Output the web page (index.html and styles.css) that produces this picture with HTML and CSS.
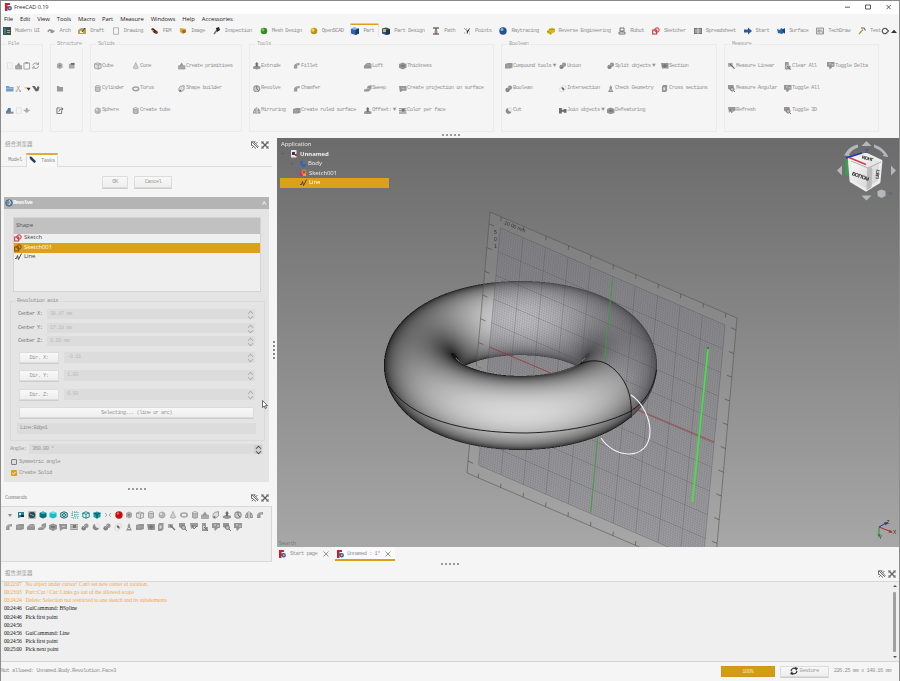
FILE: index.html
```html
<!DOCTYPE html>
<html lang="en">
<head>
<meta charset="utf-8">
<title>FreeCAD 0.19</title>
<link rel="stylesheet" href="styles.css">
</head>
<body>
<div class="app">
  <header class="titlebar"><i data-icon="app"></i><span>FreeCAD 0.19</span>
    <svg class="winbtns" viewBox="0 0 48 8"><path d="M1 4.200h5M21.500 2h5v4h-5zM42.500 2l4.200 4.200M46.700 2l-4.200 4.200" fill="none" stroke="#333" stroke-width=".8"/></svg>
  </header>
  <nav class="menu"><span>File</span><span>Edit</span><span>View</span><span>Tools</span><span>Macro</span><span>Part</span><span>Measure</span><span>Windows</span><span>Help</span><span>Accessories</span></nav>
  <nav class="benches">
    <span><i data-icon="modern"></i>Modern UI</span><span><i data-icon="arch"></i>Arch</span><span><i data-icon="draft"></i>Draft</span><span><i data-icon="page"></i>Drawing</span><span><i data-icon="fem"></i>FEM</span><span><i data-icon="image"></i>Image</span><span><i data-icon="inspect"></i>Inspection</span><span><i data-icon="green"></i>Mesh Design</span><span><i data-icon="yellow"></i>OpenSCAD</span><span class="on"><i data-icon="bluebox"></i>Part</span><span><i data-icon="pdesign"></i>Part Design</span><span><i data-icon="path"></i>Path</span><span><i data-icon="points"></i>Points</span><span><i data-icon="bluesphere"></i>Raytracing</span><span><i data-icon="reverse"></i>Reverse Engineering</span><span><i data-icon="robot"></i>Robot</span><span><i data-icon="sketch"></i>Sketcher</span><span><i data-icon="sheet"></i>Spreadsheet</span><span><i data-icon="start"></i>Start</span><span><i data-icon="surface"></i>Surface</span><span><i data-icon="techdraw"></i>TechDraw</span><span class="last"><i data-icon="hammer"></i>Test</span>
    <svg class="collapse" viewBox="0 0 18 8"><path d="M5 1.500a2.700 2.700 0 1 0 0 5M5 1.500L7.500 4 5 6.500" fill="none" stroke="#555" stroke-width="1.200"/><path d="M10 6l3-3.200L16 6z" fill="#333"/></svg>
  </nav>
  <section class="ribbon">
    <div class="group g-file"><h6>File</h6>
      <div class="row"><i data-icon="page" class="dim"></i><i data-icon="prims"></i><i data-icon="clip"></i><i data-icon="refresh"></i></div>
      <div class="row"><i data-icon="folderblue"></i><i data-icon="cut"></i><i data-icon="dropy"></i><i data-icon="cursorq"></i></div>
      <div class="row"><i data-icon="save"></i><i data-icon="page" class="dim"></i><i data-icon="drop"></i></div>
    </div>
    <div class="group g-struct"><h6>Structure</h6>
      <div class="row"><i data-icon="part"></i><i data-icon="export"></i></div>
      <div class="row"><i data-icon="folder"></i></div>
      <div class="row"><i data-icon="link"></i></div>
    </div>
    <div class="group g-solids"><h6>Solids</h6>
      <div class="row"><span><i data-icon="cube"></i>Cube</span><span><i data-icon="cone"></i>Cone</span><span><i data-icon="prims"></i>Create primitives</span></div>
      <div class="row"><span><i data-icon="cyl"></i>Cylinder</span><span><i data-icon="torus"></i>Torus</span><span><i data-icon="builder"></i>Shape builder</span></div>
      <div class="row"><span><i data-icon="sphere"></i>Sphere</span><span><i data-icon="tube"></i>Create tube</span></div>
    </div>
    <div class="group g-tools"><h6>Tools</h6>
      <div class="row"><span><i data-icon="extrude"></i>Extrude</span><span><i data-icon="fillet"></i>Fillet</span><span><i data-icon="loft"></i>Loft</span><span><i data-icon="thick"></i>Thickness</span></div>
      <div class="row"><span><i data-icon="revolve"></i>Revolve</span><span><i data-icon="fillet"></i>Chamfer</span><span><i data-icon="sweep"></i>Sweep</span><span><i data-icon="flag"></i>Create projection on surface</span></div>
      <div class="row"><span><i data-icon="mirror"></i>Mirroring</span><span><i data-icon="ruled"></i>Create ruled surface</span><span><i data-icon="extrude"></i>Offset: <b>▼</b></span><span><i data-icon="layers"></i>Color per face</span></div>
    </div>
    <div class="group g-bool"><h6>Boolean</h6>
      <div class="row"><span><i data-icon="ruled"></i>Compound tools <b>▼</b></span><span><i data-icon="union"></i>Union</span><span><i data-icon="union"></i>Split objects <b>▼</b></span><span><i data-icon="section"></i>Section</span></div>
      <div class="row"><span><i data-icon="union"></i>Boolean</span><span><i data-icon="inter"></i>Intersection</span><span><i data-icon="check"></i>Check Geometry</span><span><i data-icon="tube2"></i>Cross sections</span></div>
      <div class="row"><span><i data-icon="cutb"></i>Cut</span><span><i data-icon="join"></i>Join objects <b>▼</b></span><span><i data-icon="thick"></i>Defeaturing</span></div>
    </div>
    <div class="group g-meas"><h6>Measure</h6>
      <div class="row"><span><i data-icon="mlin"></i>Measure Linear</span><span><i data-icon="clear"></i>Clear All</span><span><i data-icon="toggle"></i>Toggle Delta</span></div>
      <div class="row"><span><i data-icon="mang"></i>Measure Angular</span><span><i data-icon="toggle"></i>Toggle All</span></div>
      <div class="row"><span><i data-icon="mref"></i>Refresh</span><span><i data-icon="mang"></i>Toggle 3D</span></div>
    </div>
  </section>
  <div class="dots dots-top"></div>

  <main class="main">
    <aside class="combo">
      <div class="dockhead h1"><span>组合浏览器</span><i data-icon="float"></i><i data-icon="close"></i></div>
      <div class="paneltabs"><span>Model</span><span class="on"><i data-icon="pencil"></i>Tasks</span></div>
      <div class="okrow"><button class="ok">OK</button><button class="cancel">Cancel</button></div>
      <div class="task">
        <div class="taskhead"><i data-icon="revblue"></i><b>Revolve</b><em>^</em></div>
        <div class="shapes">
          <div class="th">Shape</div>
          <div class="tr"><i data-icon="sketch"></i>Sketch</div>
          <div class="tr sel"><i data-icon="sketchd"></i>Sketch001</div>
          <div class="tr"><i data-icon="line"></i>Line</div>
        </div>
        <div class="axis">
          <h6>Revolution axis</h6>
          <div class="f c"><label>Center X:</label><div class="spin">38.87 mm<s></s></div></div>
          <div class="f c"><label>Center Y:</label><div class="spin">17.18 mm<s></s></div></div>
          <div class="f c"><label>Center Z:</label><div class="spin">0.00 mm<s></s></div></div>
          <div class="f d"><button>Dir. X:</button><div class="spin">-0.11<s></s></div></div>
          <div class="f d"><button>Dir. Y:</button><div class="spin">1.00<s></s></div></div>
          <div class="f d"><button>Dir. Z:</button><div class="spin">0.00<s></s></div></div>
          <button class="selecting">Selecting... (line or arc)</button>
          <div class="edge">Line:Edge1</div>
        </div>
        <div class="angle"><label>Angle:</label><div class="spin">360.00 °<s></s></div></div>
        <div class="ck"><svg viewBox="0 0 6 6"><rect x=".5" y=".5" width="5" height="5" rx=".5" fill="#ddd" stroke="#666" stroke-width=".8"/></svg>Symmetric angle</div>
        <div class="ck"><svg viewBox="0 0 6 6"><rect width="6" height="6" rx=".8" fill="#d9a01c"/><path d="M1.300 3l1.200 1.200L4.700 1.800" fill="none" stroke="#fff" stroke-width=".9"/></svg>Create Solid</div>
      </div>
      <div class="dots dots-left"></div>
      <div class="dockhead h2"><span>Commands</span><i data-icon="float"></i><i data-icon="close"></i></div>
      <div class="commands">
        <div class="crow" data-icons="arrow fit shaded cubeteal cubecyan ring dotsbox wire cubeteal2 gap red part cube cyl sphere cone torus tube prims builder extrude revolve mirror fillet"></div>
        <div class="crow c2" data-icons="fillet ruled loft sweep thick flag layers union cutb union inter check ruled section tube2 mlin mang mref clear toggle mang toggle"></div>
      </div>
    </aside>
    <div class="vdots"></div>

    <section class="work">
      <div class="view">
        <canvas id="torus" class="torus" width="280" height="176"></canvas>
        <svg class="scene" viewBox="277 138 622 409">
          <defs>
            <mask id="behind" maskUnits="userSpaceOnUse" x="277" y="138" width="622" height="409">
              <rect x="277" y="138" width="622" height="409" fill="#fff"/>
              <path d="M384 345H458C463 361 484 376 522 376C552 376 572 371 580 363C588 359 600 359 609 366C622 375 631 389 631 412L630 418C602 442 560 450 521 450C440 450 384 410 384 365Z" fill="#000"/>
            </mask>
            <linearGradient id="cubeface" x1="0" x2="1" y1="0" y2="1"><stop stop-color="#fff"/><stop offset="1" stop-color="#ccc"/></linearGradient>
          </defs>
          <g mask="url(#behind)">
            <g id="grid"></g>
            <path d="M612.500 278L590.500 512" stroke="#36a83a" stroke-width=".8"/>
            <path d="M489 347L714 442" stroke="#a33a40" stroke-width=".8"/>
          </g>
          <path d="M389 386C410 418 462 433 526 433C574 432 610 422 631 411C645 402 654 388 656.500 370" fill="none" stroke="#111" stroke-width=".9"/>
          <path d="M580 364C592 359 602 360 610 366C624 376 633 393 631 418" fill="none" stroke="#111" stroke-width=".9"/>
          <path d="M631 395C642 402 650 418 650 431C650 447 640 454.500 628 454C617 453 607 447 601 438" fill="none" stroke="#f5f5f5" stroke-width="1.100"/>
          <path d="M708 349L692.500 501" stroke="#3be645" stroke-width="1.700"/>
          <circle cx="708" cy="348" r="1" fill="#267a2b"/><circle cx="692.500" cy="501" r="1" fill="#3be645"/>
          <text class="gridtext" transform="translate(504 224) rotate(22)">10.00 mm</text>
          <text class="gridtext" transform="translate(494 234)">5</text><text class="gridtext" transform="translate(494 241)">0</text><text class="gridtext" transform="translate(494 248)">1</text>
          <g fill="#b4b7bb">
            <path d="M866.500 141l5 5h-10zM866.500 200.500l-5-5h10zM837 170.500l5-5v10zM896 170.500l-5-5v10z"/>
            <path d="M845 154q4-8 13-9.500v3q-6 2-9 7l1 1.500-6-.5zM888 156q-4-8-14-11.500l0 3q6 2 10 7l-1.500 1.500 5.500 1z"/>
            <path d="M877.500 191l4-1.500 4 1.500v5l-4 2-4-2z"/><path d="M888 192.500h5l-2.500 3z" fill="#666"/>
          </g>
          <path d="M849 158L866 154 881 161 879 182 866 190 851 181Z" fill="url(#cubeface)" stroke="#eee" stroke-width="2.800" stroke-linejoin="round"/>
          <path d="M851 161L868 168 881 162M868 168L867 190" fill="none" stroke="#a9a9a9" stroke-width=".9"/>
          <path d="M868 168l3-1.500 1.500 2.500-1 18-4 3z" fill="#b9bbbd"/>
          <path d="M849 157.500L866 164.500" stroke="#d63c45" stroke-width="1.500"/>
          <path d="M846.800 159V175.500" stroke="#2da84a" stroke-width="2.600"/><path d="M846 158L862 153" stroke="#2832b8" stroke-width="1.800"/>
          <text class="cubetext" transform="translate(851.500 175) rotate(20)">BOTTOM</text><text class="cubetext small" transform="translate(861.500 158.500) rotate(14)">RIGHT</text><text class="cubetext small" transform="translate(878.500 179) rotate(-82)">LEFT</text><text class="zlab" x="865" y="153">Z</text>
          <g fill="none" stroke-width="1"><path d="M879 527l13 5" stroke="#b52b2b"/><path d="M879 527v9" stroke="#24983b"/><path d="M879 527l7-4" stroke="#2b3291"/></g>
          <path d="M893 532.500l-4.500.3 1.300-3z" fill="#b52b2b"/><path d="M879 538l-1.800-4h3.600z" fill="#24983b"/><path d="M888 522l-4 .5 1.700 3z" fill="#2b3291"/>
          <text class="axlab" x="886.500" y="523.500">Z</text><text class="axlab" x="893" y="534">X</text><text class="axlab" x="879" y="539">Y</text>
        </svg>
        <div class="tree">
          <div>Application</div>
          <div class="t1"><u>−</u><i data-icon="doc"></i><b>Unnamed</b></div>
          <div class="t2"><u>›</u><i data-icon="body"></i>Body</div>
          <div class="t3"><i data-icon="sk2"></i>Sketch001</div>
          <div class="t3 sel"><i data-icon="line"></i>Line</div>
        </div>
        <div class="search">Search</div>
      </div>
      <div class="doctabs"><span><i data-icon="app"></i>Start page<i data-icon="x"></i></span><span class="on"><i data-icon="app"></i>Unnamed : 1*<i data-icon="x"></i></span></div>
      <div class="dots dots-work"></div>
    </section>
  </main>

  <section class="report">
    <div class="dockhead h3"><span>报告浏览器</span><i data-icon="float"></i><i data-icon="close"></i></div>
    <div class="log">
      <div class="lines">
        <p class="w"><time>00:22:07</time>No object under cursor! Can't set new center of rotation.</p>
        <p class="w"><time>00:23:03</time>Part::Cut / Cut: Links go out of the allowed scope</p>
        <p class="w"><time>00:24:24</time>Delete: Selection not restricted to one sketch and its subelements</p>
        <p><time>00:24:46</time>GuiCommand: BSpline</p>
        <p><time>00:24:46</time>Pick first point</p>
        <p><time>00:24:56</time></p>
        <p><time>00:24:56</time>GuiCommand: Line</p>
        <p><time>00:24:56</time>Pick first point</p>
        <p><time>00:25:00</time>Pick next point</p>
      </div>
      <div class="scroll"><svg viewBox="0 0 4 3"><path d="M0 3l2-2 2 2z"/></svg><div class="thumb"></div><svg viewBox="0 0 4 3"><path d="M0 0l2 2 2-2z"/></svg></div>
    </div>
  </section>
  <footer class="status"><span class="msg">Not allowed: Unnamed.Body.Revolution.Face3</span><div class="bar">100%</div><button><i data-icon="gest"></i>Gesture</button><span class="dim2">226.25 mm x 140.16 mm</span></footer>
</div>
<svg class="pointer" viewBox="0 0 6 9"><path d="M.5.500v7L2.200 6l1.100 2.500 1.200-.5-1.100-2.400H5.500z" fill="#fff" stroke="#333" stroke-width=".7"/></svg>
<script src="app.js"></script>
</body>
</html>
```
FILE: styles.css
```css
* { box-sizing: border-box; margin: 0; padding: 0; }
body {
  width: 900px; height: 681px; overflow: hidden; background: #f5f5f5;
  font: 5.5px/8px "Liberation Mono", "Noto Sans CJK SC", monospace; letter-spacing: -.57px; color: #949494;
}
i { display: inline-block; flex: none; width: 8px; height: 8px; }
i svg { display: block; width: 100%; height: 100%; }
button { font: inherit; letter-spacing: inherit; color: #999; border: 1px solid #dcdcdc; border-radius: 1px; background: linear-gradient(#f8f8f8, #eee); box-shadow: 0 1px 0 #ccc; white-space: pre; }
.app { display: flex; flex-direction: column; width: 900px; height: 681px; border: 1px solid #8c8c8c; border-top-color: #888; border-bottom: 0; white-space: nowrap; }

.titlebar { height: 13px; background: #fff; display: flex; align-items: center; gap: 2px; padding: 0 7px 1px 3px; font: 5.7px/8px "Open Sans", sans-serif; letter-spacing: -.1px; color: #333; }
.winbtns { width: 48px; height: 8px; margin-left: auto; }
.menu { height: 10px; display: flex; gap: 7px; padding-left: 3px; font: 5.9px/10px "Open Sans", sans-serif; letter-spacing: -.07px; color: #222; }
.benches { height: 15px; display: flex; align-items: center; padding: 0 0 1px 2px; }
.benches span { display: flex; align-items: center; gap: 4px; height: 14px; margin-right: 7.9px; }
.benches .on { box-shadow: 0 -2px 0 -.5px #d9a01c; border: 1px solid #e6e6e6; border-width: 0 1px; margin-left: -1px; padding-right: 4px; margin-right: 3px; height: 12px; }
.benches .last { margin-right: 0; }
.collapse { width: 18px; height: 8px; flex: none; }

.ribbon { display: flex; height: 93px; padding-top: 5px; }
.group { position: relative; border: 1px solid #ebebeb; height: 88px; padding: 10px 0 0 3px; margin-right: 7px; flex: none; }
.group h6 { position: absolute; left: 5px; top: -5px; font-weight: 400; font-size: 5.5px; line-height: 8px; padding: 0 2px; background: #f5f5f5; color: #a6a6a6; }
.row { display: grid; height: 22.200px; align-items: center; }
.row span { display: flex; align-items: center; gap: .5px; }
.row b { font-size: 6px; letter-spacing: 0; margin-left: 1px; font-weight: 400; }
.row span i, .row > i { width: 7.500px; height: 7.500px; }
.g-file { width: 42px; border-left: 0; padding-left: 5px; }
.g-file .row, .g-struct .row { grid-template-columns: repeat(4, 8.700px); }
.g-struct { width: 33px; padding-left: 5px; } .g-struct .row { grid-template-columns: 11.700px 12px; }
.g-struct h6 { left: 4px; }
.g-solids { width: 152px; } .g-solids .row { grid-template-columns: 38px 46px 60px; }
.g-tools { width: 245px; } .g-tools .row { grid-template-columns: 40px 71px 35px 90px; }
.g-bool { width: 216px; } .g-bool .row { grid-template-columns: 54px 48px 54px 50px; }
.g-meas { width: 155px; } .g-meas .row { grid-template-columns: 56px 43px 50px; }
.dim { opacity: .3; }
.dots { height: 2px; width: 18px; background: repeating-linear-gradient(90deg, #999 0 2px, transparent 2px 4px); }
.dots-top { margin: 2px 0 2px 441px; }

.main { height: 429px; display: flex; }
.combo { width: 271px; display: flex; flex-direction: column; }
.dockhead { display: flex; align-items: center; gap: 2px; padding: 0 3px 0 4px; letter-spacing: 0; font-size: 5.5px; flex: none; }
.dockhead span { margin-right: auto; }
.h1 { height: 15px; padding-bottom: 1px; }
.paneltabs { height: 14px; display: flex; border-bottom: 1px solid #dcdcdc; padding-left: 7px; }
.paneltabs span { line-height: 13px; width: 18px; }
.paneltabs .on { display: flex; gap: 4px; align-items: center; width: 32px; height: 14px; padding: 0 0 2px 2px; border-top: 2px solid #e0aa38; border-left: 1px solid #ddd; border-right: 1px solid #ddd; background: #f8f8f8; }
.okrow { height: 30px; padding: 9px 0 0 101px; display: flex; gap: 6px; }
.okrow button { height: 12px; } .ok { width: 26px; } .cancel { width: 38px; }
.task { margin-left: 3px; width: 265px; height: 285px; background: #e4e4e4; flex: none; }
.taskhead { height: 12px; background: #b4b4b4; color: #fff; display: flex; align-items: center; padding: 0 3px 0 1px; }
.taskhead em { margin-left: auto; font-style: normal; font-size: 8px; line-height: 6px; padding-top: 3px; }
.shapes { margin: 8px 0 0 9px; width: 248px; height: 75px; background: #efefef; border: 1px solid #d4d4d4; font: 6px/9.600px "Open Sans", sans-serif; letter-spacing: -.08px; color: #444; }
.th { height: 15.500px; line-height: 15px; background: #c1c1c1; padding-left: 2px; color: #555; }
.tr { display: flex; align-items: center; gap: 2px; height: 9.500px; }
.sel { background: #dba219; color: #fff; }
.axis { position: relative; margin: 9px 0 0 6px; width: 255px; height: 140px; border: 1px solid #dadada; padding: 5.500px 9px 0 6px; }
.axis h6 { position: absolute; left: 4px; top: -5px; padding: 0 2px; font-weight: 400; font-size: 5.5px; line-height: 8px; background: #e4e4e4; }
.f { display: flex; align-items: center; } .f.c { height: 13.600px; } .f.d { height: 18.300px; }
.f.c label { width: 30px; padding-left: 1px; color: #777; }
.f.d button { width: 40px; height: 11px; margin: 0 5px 0 2px; line-height: 9px; }
.spin { position: relative; flex: 1; height: 10px; line-height: 10px; padding-left: 3px; background: #dcdcdc; color: #bdbdbd; }
.f.d .spin { height: 11px; }
.spin s { position: absolute; right: 1px; top: 1px; width: 8px; height: 9px; color: #a5a5a5; text-decoration: none; }
.spin s::before, .spin s::after { content: ""; position: absolute; left: 2px; width: 4px; height: 4px; border: 1px solid currentColor; border-width: 1px 0 0 1px; transform: rotate(45deg) scale(.8); top: 1px; }
.spin s::after { top: 4px; transform: rotate(225deg) scale(.8); }
.selecting { display: block; width: 235px; height: 11px; line-height: 9px; margin: 3.500px 0 5px 2px; }
.edge { height: 11px; width: 239px; background: #dcdcdc; padding-left: 3px; line-height: 10px; }
.angle { display: flex; align-items: center; height: 15px; padding-left: 6px; }
.angle label { width: 19px; } .angle .spin { flex: none; width: 234px; color: #999; } .angle s { background: #cfcfcf; color: #333; }
.ck { display: flex; align-items: center; gap: 2px; height: 11.500px; padding-left: 7px; } .ck svg { width: 6px; height: 6px; }
.ck, .angle { position: relative; }
.dots-left { margin: 6px 0 0 127px; }
.h2 { height: 16px; letter-spacing: -.57px; }
.commands { width: 271px; height: 56px; border: 1px solid #d8d8d8; border-left: 0; background: #efefef; padding: 2px 0 0 5px; }
.crow { display: flex; gap: 2.870px; height: 12px; align-items: center; }
.crow.c2 { margin-left: -1px; gap: 2.900px; }
.vdots { width: 2px; height: 18px; margin: 203px 2px 0 1px; background: repeating-linear-gradient(#888 0 2px, transparent 2px 4px); }
.work { width: 622px; }
.view { position: relative; height: 409px; background: linear-gradient(#6b6b6b, #a7a7a7); overflow: hidden; }
.torus { position: absolute; left: 104px; top: 140px; width: 280px; height: 176px; }
.scene { position: absolute; inset: 0; width: 622px; height: 409px; }
.gridtext { font: 5px "Liberation Sans", sans-serif; letter-spacing: 0; fill: #333; }
.cubetext { font: bold 5.200px "Liberation Sans", sans-serif; letter-spacing: -.9px; fill: #222; } .cubetext.small { font-size: 4.500px; letter-spacing: -.6px; } .zlab { font: 6px "Liberation Sans", sans-serif; fill: #3238a0; }
.axlab { font: 5px "Liberation Sans", sans-serif; letter-spacing: 0; fill: #333; }
.tree { position: absolute; left: 3px; top: 2px; width: 109px; font: 6px/9.500px "Open Sans", sans-serif; letter-spacing: -.08px; color: #eee; }
.tree div { display: flex; align-items: center; height: 9.500px; padding-left: 1px; gap: 2px; }
.tree u { width: 7px; text-decoration: none; color: #444; } .tree .t1 { gap: 2px; } .tree .t2 { padding-left: 11px; gap: 1px; } .tree .t3 { padding-left: 19px; }
.search { position: absolute; left: 2px; bottom: 0; font: 5.500px/8px "Open Sans", sans-serif; letter-spacing: 0; color: #777; }
.doctabs { display: flex; height: 14px; gap: 3px; }
.doctabs span { display: flex; align-items: center; height: 14px; gap: 4px; padding: 0 2px 0 1px; }
.doctabs .on { border-bottom: 2px solid #d9a01c; background: #fafafa; gap: 3px; width: 60px; padding: 1px 1px 0; }
.doctabs i:last-child { margin-left: 1px; }
.dots-work { margin: 2px 0 0 164px; }

.report { height: 95px; }
.h3 { height: 14px; }
.log { height: 81px; border-top: 1px solid #d8d8d8; border-bottom: 1px solid #d4d4d4; background: #efefef; display: flex; overflow: hidden; }
.lines { flex: 1; margin-top: -2px; padding-left: 3px; font: 5.600px/8.130px "Liberation Serif", serif; letter-spacing: -.06px; color: #222; }
.lines p { height: 8.130px; } .lines time { display: inline-block; width: 21.500px; letter-spacing: -.3px; } .lines .w { color: #f0a94b; }
.scroll { width: 8px; display: flex; flex-direction: column; padding: 2px; justify-content: space-between; } .scroll svg { width: 4px; height: 3px; fill: #555; } .thumb { height: 60px; width: 3px; background: #a0a0a0; border-radius: 1px; }
.status { height: 18px; display: flex; align-items: center; padding-right: 8px; }
.msg { margin-right: auto; }
.bar { width: 54px; height: 11px; background: #d39c14; color: #f5e0ae; text-align: center; line-height: 9px; border: 1px solid #c8981e; margin-right: 5px; }
.status button { width: 49px; height: 11px; margin-right: 5px; display: flex; align-items: center; justify-content: center; gap: 2px; }
.pointer { position: absolute; left: 262px; top: 400px; width: 6px; height: 9px; }
```
FILE: app.js
```js
// Icons are drawn on an 8x8 canvas.
const G = '#959595', D = '#6c6c6c', L = '#c4c4c4';
const icons = {
  app: '<path d="M1 0h5v2H3.500v1.500h2v2h-2V8H1z" fill="#c8232c"/><circle cx="5.700" cy="5.300" r="1.600" fill="#a9bbd8" stroke="#3b5a94" stroke-width="1.200"/>',
  modern: '<path d="M0 0h8v8H0z" fill="#3d5145"/><path d="M1 1h2v6H1z" fill="#2b79a8"/><path d="M4 3h3v1H4zM4 5h3v1H4z" fill="#c2a55d"/>',
  arch: `<path d="M0 4l2.500-2 2 .5L8 4 6 6H3z" fill="${G}"/><path d="M2 4h1.500v2H2z" fill="#eee"/>`,
  draft: '<path d="M0 7V3l3-2h5v6z" fill="#b2a466"/><path d="M2 4h3v2H2z" fill="#f5f0c2"/><path d="M4 5l3-4" stroke="#444"/>',
  page: '<path d="M1.500.800h5v6.500h-5z" fill="#f5f5f5" stroke="#999" stroke-width=".7"/>',
  fem: '<path d="M0 2l2-1 5 4-1 2-3-1z" fill="#4c2418"/><path d="M1 3l2 1" stroke="#e89623"/><circle cx="5.500" cy="5.500" r="1" fill="#b3392b"/>',
  image: '<path d="M1 1l6 1v3L4 7 1 5z" fill="#d9a13a"/><circle cx="5" cy="4.500" r="1.800" fill="#a36828"/>',
  inspect: '<path d="M1 7l3-4" stroke="#777" stroke-width="1.500"/><path d="M3 1l3-1 1 3-3 2z" fill="#223"/>',
  green: '<circle cx="4" cy="4" r="3.300" fill="#378c20"/><circle cx="3" cy="3" r="1.400" fill="#72cc46"/>',
  yellow: '<circle cx="4" cy="4" r="3.300" fill="#b99417"/><circle cx="3" cy="3" r="1.700" fill="#f0d447"/>',
  bluebox: '<path d="M0 2l3-1.500L8 1.500v5L4.500 8 0 6.500z" fill="#2d64ad"/><path d="M0 2l4.500 1L8 1.500 3 .5z" fill="#86b3e5"/><path d="M4.500 3L8 1.500v5L4.500 8z" fill="#1c3b68"/>',
  pdesign: '<path d="M0 1.500L4 .5 8 2v5L4 8 0 6.500z" fill="#30527f"/><path d="M1 2h3v3H1z" fill="#cdbf46"/><path d="M4 3l4-1v5L4 8z" fill="#23364d"/>',
  path: '<path d="M1 1h6M1 7h6M4 1v6" stroke="#776f69" stroke-width="1.700"/><path d="M2 5h4" stroke="#b09892"/>',
  points: '<path d="M1 1l3 3M7 1L4 4v3M1 6h1M6 5h1M3 2h1M6 7h1" stroke="#888" stroke-width=".8"/>',
  bluesphere: '<circle cx="4" cy="4" r="3.700" fill="#24518f"/><circle cx="3" cy="2.500" r="1.500" fill="#86b5e3"/>',
  reverse: '<path d="M2 2l3-1.500L8 2v3L5 6.500 4 8 0 6V4z" fill="#d9bd20"/><path d="M2 2l3 1 3-1M0 4.500L3 5l1 2" stroke="#8c7812" stroke-width=".6" fill="none"/>',
  robot: '<path d="M2 1h4v3H2zM1 5h6v2H1zM4 4v1" fill="none" stroke="#666" stroke-width=".9"/>',
  sketch: '<rect x=".7" y="3" width="4" height="4" fill="none" stroke="#c8262e" stroke-width="1"/><circle cx="5" cy="3" r="2.200" fill="none" stroke="#c8262e" stroke-width="1"/>',
  sketchd: '<rect x=".7" y="3" width="4" height="4" fill="none" stroke="#8d3f12" stroke-width="1"/><circle cx="5" cy="3" r="2.200" fill="none" stroke="#8d3f12" stroke-width="1"/>',
  sheet: '<path d="M0 1h8v6H0z" fill="#777"/><path d="M1 3h6M1 5h6M4 1v6" stroke="#eee" stroke-width=".7"/>',
  start: '<path d="M0 2.500h4V.500L8 4 4 7.500v-2H0z" fill="#2d589b"/>',
  surface: '<path d="M0 2l3 1 1-2 2 1 2-1v4L5 7 1 6z" fill="#2766a5"/><path d="M5 3l3-1v5z" fill="#173d6c"/>',
  techdraw: '<path d="M.500 1h7v6h-7z" fill="#ddd" stroke="#777" stroke-width=".7"/><path d="M2 3h2v2H2zM5 3l2 3" fill="none" stroke="#777" stroke-width=".6"/>',
  hammer: '<path d="M1 7l4-4.500" stroke="#b09242" stroke-width="1.200"/><path d="M3 1h3l1.500 2.500" fill="none" stroke="#666" stroke-width="1.100"/>',
  clip: `<path d="M1 1h6v6.500H1zM3 .5h2v1H3z" fill="none" stroke="${G}" stroke-width=".9"/>`,
  refresh: `<path d="M1 3.500A3 3 0 0 1 6.500 2.500M7 .5v2.300H4.800M7 4.500A3 3 0 0 1 1.500 5.500M1 7.500V5.200h2.200" fill="none" stroke="${G}" stroke-width="1"/>`,
  folderblue: '<path d="M0 1h3l1 1h4v5H0z" fill="#6f9dc8"/><path d="M0 3h8v1H0z" fill="#a6c5e2"/>',
  folder: '<path d="M1 1h2l1 1h3.500v5H1z" fill="#999"/>',
  cut: '<path d="M2 1l3 5M5 1L2 6" stroke="#999" stroke-width=".8"/><circle cx="1.500" cy="6.500" r="1" fill="#d8a0a0"/><circle cx="5.500" cy="6.500" r="1" fill="#999"/>',
  dropy: '<path d="M1 2h4l1 2H2z" fill="#e7d96c"/><path d="M4 3h4L6 6z" fill="#333"/>',
  cursorq: '<path d="M0 1h3l2 3 1-3 2 1-1 4-3 1z" fill="#666"/>',
  save: '<path d="M0 5l3-4v3h2v3H0z" fill="#3d78a8"/><path d="M2 1h3v4H2z" fill="#557fa0"/><path d="M1 5h7v2H1z" fill="#888"/>',
  drop: '<path d="M0 3h8L4 6.500z" fill="#aaa"/><path d="M4 1v3" stroke="#aaa" stroke-width="2"/>',
  part: `<path d="M1 2l3-1.500L7 2v4L4 7.500 1 6z" fill="#aaa"/><circle cx="4" cy="4" r="1.200" fill="#888"/>`,
  export: `<path d="M1 2h6v5H1z" fill="#aaa"/><path d="M3 1h4v2H3z" fill="${D}"/>`,
  link: `<path d="M6 4v3H1V1h3" fill="none" stroke="${D}"/><path d="M3 5q0-3 4-3M5 .5L7.500 2 6 4" fill="none" stroke="${D}"/>`,
  cube: `<path d="M.500 2l3-1 4 1v4.500l-3 1-4-1zM.500 2l4 1 3-1M4.500 3v4.500" fill="#ddd" stroke="${G}" stroke-width=".8"/>`,
  cone: `<path d="M4 .5L6.700 6.500q-2.700 1.500-5.400 0z" fill="#d0d0d0" stroke="${G}" stroke-width=".6"/>`,
  cyl: `<path d="M1.500 1.500v5q2.500 1.500 5 0v-5" fill="${L}" stroke="${G}" stroke-width=".8"/><ellipse cx="4" cy="1.500" rx="2.500" ry="1" fill="#e3e3e3" stroke="${G}" stroke-width=".7"/>`,
  torus: `<ellipse cx="4" cy="4" rx="3.200" ry="2" fill="none" stroke="#a2a2a2" stroke-width="1.600"/>`,
  sphere: `<circle cx="4" cy="4" r="3.100" fill="#b5b5b5" stroke="${G}" stroke-width=".5"/><circle cx="3" cy="3" r="1.200" fill="#ddd"/>`,
  tube: `<path d="M1.500 1.500v5q2.500 1.500 5 0v-5" fill="#bbb" stroke="${G}" stroke-width=".9"/><ellipse cx="4" cy="1.700" rx="2.500" ry="1" fill="#eee" stroke="${G}" stroke-width=".8"/>`,
  tube2: `<path d="M2 0h4.500v6L4.500 8H1V2z" fill="${G}"/><path d="M2.500 2.500h2v3h-2z" fill="#ddd"/>`,
  prims: `<path d="M.500 4h7v3.500h-7z" fill="#aaa" stroke="${G}" stroke-width=".7"/><path d="M4 .5l2 3.500H1.500z" fill="${G}"/>`,
  builder: `<path d="M2.500 1.500l4-1v4.500l-3.500 2.500-2-1V3.500z" fill="#ddd" stroke="${G}" stroke-width=".9"/><circle cx="2.500" cy="6" r="1" fill="${D}"/>`,
  extrude: `<path d="M0 5l4-1.500L8 5v2L4 8 0 7z" fill="${G}"/><path d="M4 0l2 2.500H5V5H3V2.500H2z" fill="${D}"/>`,
  fillet: `<path d="M1 7V4q1-3 6-3v2.500H4.500V7z" fill="${G}"/><path d="M2 6V4q1-2 4-2" fill="none" stroke="${L}" stroke-width=".5"/>`,
  loft: `<path d="M0 7V4l3-3h4l1 2v4z" fill="${G}"/><path d="M3 1v2h5" fill="none" stroke="${L}" stroke-width=".5"/>`,
  thick: `<path d="M0 2l4-1.500L8 2v4L4 8 0 6z" fill="${G}"/><path d="M2 3h4v2H2z" fill="#777"/>`,
  revolve: `<circle cx="4" cy="4" r="3.200" fill="#ccc" stroke="${G}" stroke-width="1.200"/><path d="M4 1v3l2 2" fill="none" stroke="${D}"/>`,
  revblue: '<circle cx="4" cy="4" r="3.200" fill="#7994ab" stroke="#3e617d" stroke-width="1"/><path d="M4 1q3 2 0 5" fill="none" stroke="#d6e1e9"/>',
  sweep: `<path d="M0 5l3-1 1-3 4-1v4L5 7H0z" fill="${G}"/><path d="M3 4h3" stroke="#ddd" stroke-width=".6"/>`,
  flag: `<path d="M0 1h8v5H4L1 8z" fill="${G}"/><path d="M3 3h3v1H3z" fill="#ccc"/>`,
  mirror: `<path d="M3 7H0q0-5 3-6zM5 7h3q0-5-3-6z" fill="${G}"/><path d="M4 0v8" stroke="${D}" stroke-width=".6"/><path d="M1 5h1M6 5h1" stroke="#eee"/>`,
  ruled: `<path d="M0 2l3-1h5v5L5 7H0z" fill="${G}"/><path d="M0 4h8M3 1v6" stroke="#bbb" stroke-width=".4"/>`,
  layers: `<path d="M0 1h8v1.500H0zM0 3.300h8v1.500H0zM0 5.600h8v1.500H0z" fill="#9b9b9b"/><path d="M3 2h3v3H3z" fill="#777"/>`,
  union: `<circle cx="5.300" cy="2.800" r="2.300" fill="${G}"/><circle cx="2.700" cy="5.200" r="2.300" fill="#828282"/><path d="M2 5l3-3" stroke="#ccc" stroke-width=".6"/>`,
  cutb: `<path d="M3 1a3.200 3.200 0 1 0 4 4q-4 0-4-4z" fill="#888"/><circle cx="5.500" cy="2.500" r="2" fill="#eee" stroke="#ccc" stroke-width=".4"/>`,
  inter: `<circle cx="5" cy="3" r="2.500" fill="none" stroke="#ccc" stroke-width=".6"/><circle cx="3" cy="5" r="2.500" fill="none" stroke="#ccc" stroke-width=".6"/><path d="M3 2.500q3 0 2.500 3-3 0-2.500-3z" fill="${D}"/>`,
  check: `<path d="M4 0l1.500 3-.5 1 2 3.500H1L3 4l-.5-1z" fill="${G}"/><path d="M3 5h2v1H3z" fill="#ddd"/>`,
  section: `<path d="M0 1h8v6H1z" fill="${G}"/><path d="M1 4l3-2 3 2-3 2z" fill="#777"/>`,
  join: `<path d="M0 1h3v6H0zM5 2h3v4H5zM3 3h2v2H3z" fill="${D}"/>`,
  mlin: `<path d="M0 1h5v4H0z" fill="#aaa"/><path d="M2 2l5 5" stroke="${D}" stroke-width="1.300"/>`,
  mang: `<path d="M0 0h6v5H2L0 4z" fill="${G}"/><circle cx="4.500" cy="4.500" r="2" fill="#bbb" stroke="${D}" stroke-width=".8"/><path d="M6 6l2 2" stroke="${D}"/>`,
  mref: `<path d="M0 0h8v4H4L1 6z" fill="#999"/><path d="M2 2l2 4 3-3" fill="none" stroke="${D}" stroke-width="1"/>`,
  clear: `<path d="M1 0h4v4h2v4H1z" fill="#999"/><path d="M2 3h2v3H2z" fill="#ccc"/><path d="M3 4l4 4" stroke="${D}"/>`,
  toggle: `<path d="M0 0h8v5H6L3 8 2 5H0z" fill="${G}"/><path d="M2 2h2M5 3h2" stroke="#eee" stroke-width=".8"/>`,
  float: '<path d="M.500.800h4M.500.800v4M.500.500l6.500 6.500M3 1l4.500 5M1 4l4 3.500M.800 7.200L3 5M4.500 3L6.500 1" fill="none" stroke="#666" stroke-width=".9"/>',
  close: '<path d="M.500.500l7 7M7.500.500l-7 7" stroke="#5c5c5c" stroke-width="1.200"/><path d="M2.300 0v2.300H0M5.700 0v2.300H8M2.300 8V5.700H0M5.700 8V5.700H8" fill="none" stroke="#888" stroke-width=".7"/>',
  x: '<path d="M1.500 1.500l5 5M6.500 1.500l-5 5" stroke="#888" stroke-width=".9"/>',
  pencil: '<path d="M.500.500l2 .3 4.500 4.500-1.500 2L1 3z" fill="#24425f"/>',
  line: '<path d="M1 5.500h1.500l1-3 1 4 3-6" fill="none" stroke="#37404c" stroke-width=".9"/>',
  doc: '<path d="M1 0h5.500v7.500H1z" fill="#e7e4ee"/><path d="M2 2h3v3H2z" fill="#435"/><path d="M5 4h2v2H5z" fill="#b33"/>',
  body: '<path d="M1 1h3v3h3v3H3V5H1z" fill="#3867ae"/>',
  sk2: '<rect x=".7" y="2" width="5" height="5" fill="#c23478"/><circle cx="5" cy="3" r="2" fill="none" stroke="#e28b24" stroke-width="1.100"/><path d="M4 5h3v2H4z" fill="#dfa535"/>',
  arrow: '<path d="M2 3h4L4 6z" fill="#888"/>',
  fit: '<path d="M1 1h6v5H4L1 7z" fill="#277f91"/><path d="M2 2h2v2H2z" fill="#ddd"/><path d="M4 4h3v2H4z" fill="#133"/>',
  shaded: '<path d="M0 0H8V8H0z" fill="#c7c1b6"/><circle cx="4" cy="4" r="3.300" fill="#254e59"/><path d="M2 3l4 2" stroke="#88a2a7"/>',
  cubeteal: '<path d="M.500 2L4 .5 7.500 2v4L4 7.500.500 6z" fill="#0b6e78"/><path d="M.500 2l4 1 3-1L4 .5z" fill="#2bbfc8"/>',
  cubecyan: '<path d="M.500 2L4 .5 7.500 2v4L4 7.500.500 6z" fill="#16bdc8"/><path d="M.500 2l4 1 3-1L4 .5z" fill="#64e2e8"/>',
  ring: '<path d="M.800 2L4 .8 7.200 2v4L4 7.200.800 6z" fill="#c4e8e9" stroke="#186c76" stroke-width="1"/><circle cx="4" cy="4" r="1.500" fill="none" stroke="#186c76"/>',
  dotsbox: '<path d="M1 1h6v6H1zM4 1v6M1 4h6" fill="none" stroke="#299aa3" stroke-width="1" stroke-dasharray="1 1"/>',
  wire: '<path d="M.800 2L4 .8 7.200 2v4L4 7.200.800 6zM.800 2L4 3.300 7.200 2M4 3.300v4" fill="#e6f4f4" stroke="#147d87" stroke-width=".9"/>',
  cubeteal2: '<path d="M.500 2L4 .5 7.500 2v4L4 7.500.500 6z" fill="#139ba6"/><path d="M.500 2L4 3.300 7.500 2M4 3.300V7.500" fill="none" stroke="#064f56"/>',
  gap: '<path d="M1 2l2 2-2 2M7 2L5 4l2 2" fill="none" stroke="#79a1a4" stroke-width=".8"/>',
  red: '<circle cx="4" cy="4" r="3.700" fill="#c70f13"/><circle cx="3" cy="2.500" r="1.200" fill="#ee5753"/>',
  gest: '<path d="M1 4A3 3 0 0 1 6 2M7 4A3 3 0 0 1 2 6" fill="none" stroke="#333" stroke-width="1.200"/><path d="M5 0l3 1-2 3zM3 8L0 7l2-3z" fill="#333"/>'
};
const iconSvg = n => `<svg viewBox="0 0 8 8">${icons[n]}</svg>`;
document.querySelectorAll('[data-icons]').forEach(r => {
  r.innerHTML = r.dataset.icons.split(' ').map(n => `<i data-icon="${n}"></i>`).join('');
});
document.querySelectorAll('[data-icon]').forEach(e => { e.innerHTML = iconSvg(e.dataset.icon); });

// Sketch plane: a frame with ticks around a 10x10 grid with fine subdivisions.
const at = (o, u, v, a, b) => [o[0] + u[0] * a + v[0] * b, o[1] + u[1] * a + v[1] * b].map(n => n.toFixed(1)).join(' ');
const inner = [[500.5, 228], [224.5, 97], [-22, 237]];
const outer = [[490, 212], [247, 106], [-23, 261]];
const seg = (f, a, b, c, d) => `M${at(...f, a, b)}L${at(...f, c, d)}`;
const quad = f => `M${at(...f, 0, 0)}L${at(...f, 1, 0)}L${at(...f, 1, 1)}L${at(...f, 0, 1)}Z`;
let minor = '', major = '', ticks = '';
for (let k = 0; k <= 100; k++) {
  const t = k / 100, line = seg(inner, t, 0, t, 1) + seg(inner, 0, t, 1, t);
  if (k % 10) minor += line; else major += line;
}
for (let k = 0; k <= 10; k++) {
  const t = (k + .5) / 11;
  ticks += seg(outer, t, 0, t, .016) + seg(outer, t, 1, t, .984) + seg(outer, 0, t, .02, t) + seg(outer, 1, t, .98, t);
}
document.getElementById('grid').innerHTML =
  `<path d="${quad(outer)}" fill="#aaa" fill-opacity=".13" stroke="#555" stroke-width=".6"/>` +
  `<path d="${quad(inner)}" fill="#8c8c96" fill-opacity=".25"/>` +
  `<path d="${minor}" stroke="#4a4a56" stroke-opacity=".27" stroke-width=".5"/>` +
  `<path d="${major}" stroke="#45454c" stroke-opacity=".55" stroke-width=".6" fill="none"/>` +
  `<path d="${ticks}" stroke="#444" stroke-width=".6"/>`;

// Torus lit from the camera, traced per pixel in an orthographic view.
const cv = document.getElementById('torus'), ctx = cv.getContext('2d');
const W = cv.width, H = cv.height, img = ctx.createImageData(W, H);
const R = 99.5, r = 37, s = .477, c = Math.sqrt(1 - s * s);
const sdf = (x, y, z) => Math.hypot(Math.hypot(x, z) - R, y) - r;
for (let py = 0; py < H; py++) for (let px = 0; px < W; px++) {
  let sum = 0, hits = 0;
  for (let k = 0; k < 4; k++) {
    const sx = px + .25 + (k % 2) * .5 - 139.5, sy = 87.5 - (py + .25 + (k >> 1) * .5);
    let t = -190;
    for (let n = 0; n < 90 && t < 190; n++) {
      const x = sx, y = sy * c - t * s, z = sy * s + t * c, d = sdf(x, y, z);
      if (d < .08) {
        const h = Math.hypot(x, z), nx = x * (h - R) / h / r, nz = z * (h - R) / h / r, ny = y / r;
        const lit = Math.max(0, ny * s - nz * c);
        sum += lit < .14 ? 22 : 18 + 197 * Math.pow(lit, 1.05); hits++;
        break;
      }
      t += d;
    }
  }
  const o = (py * W + px) * 4, g = hits ? sum / hits : 0;
  img.data[o] = img.data[o + 1] = img.data[o + 2] = g;
  img.data[o + 3] = hits * 63.75;
}
ctx.putImageData(img, 0, 0);
```
